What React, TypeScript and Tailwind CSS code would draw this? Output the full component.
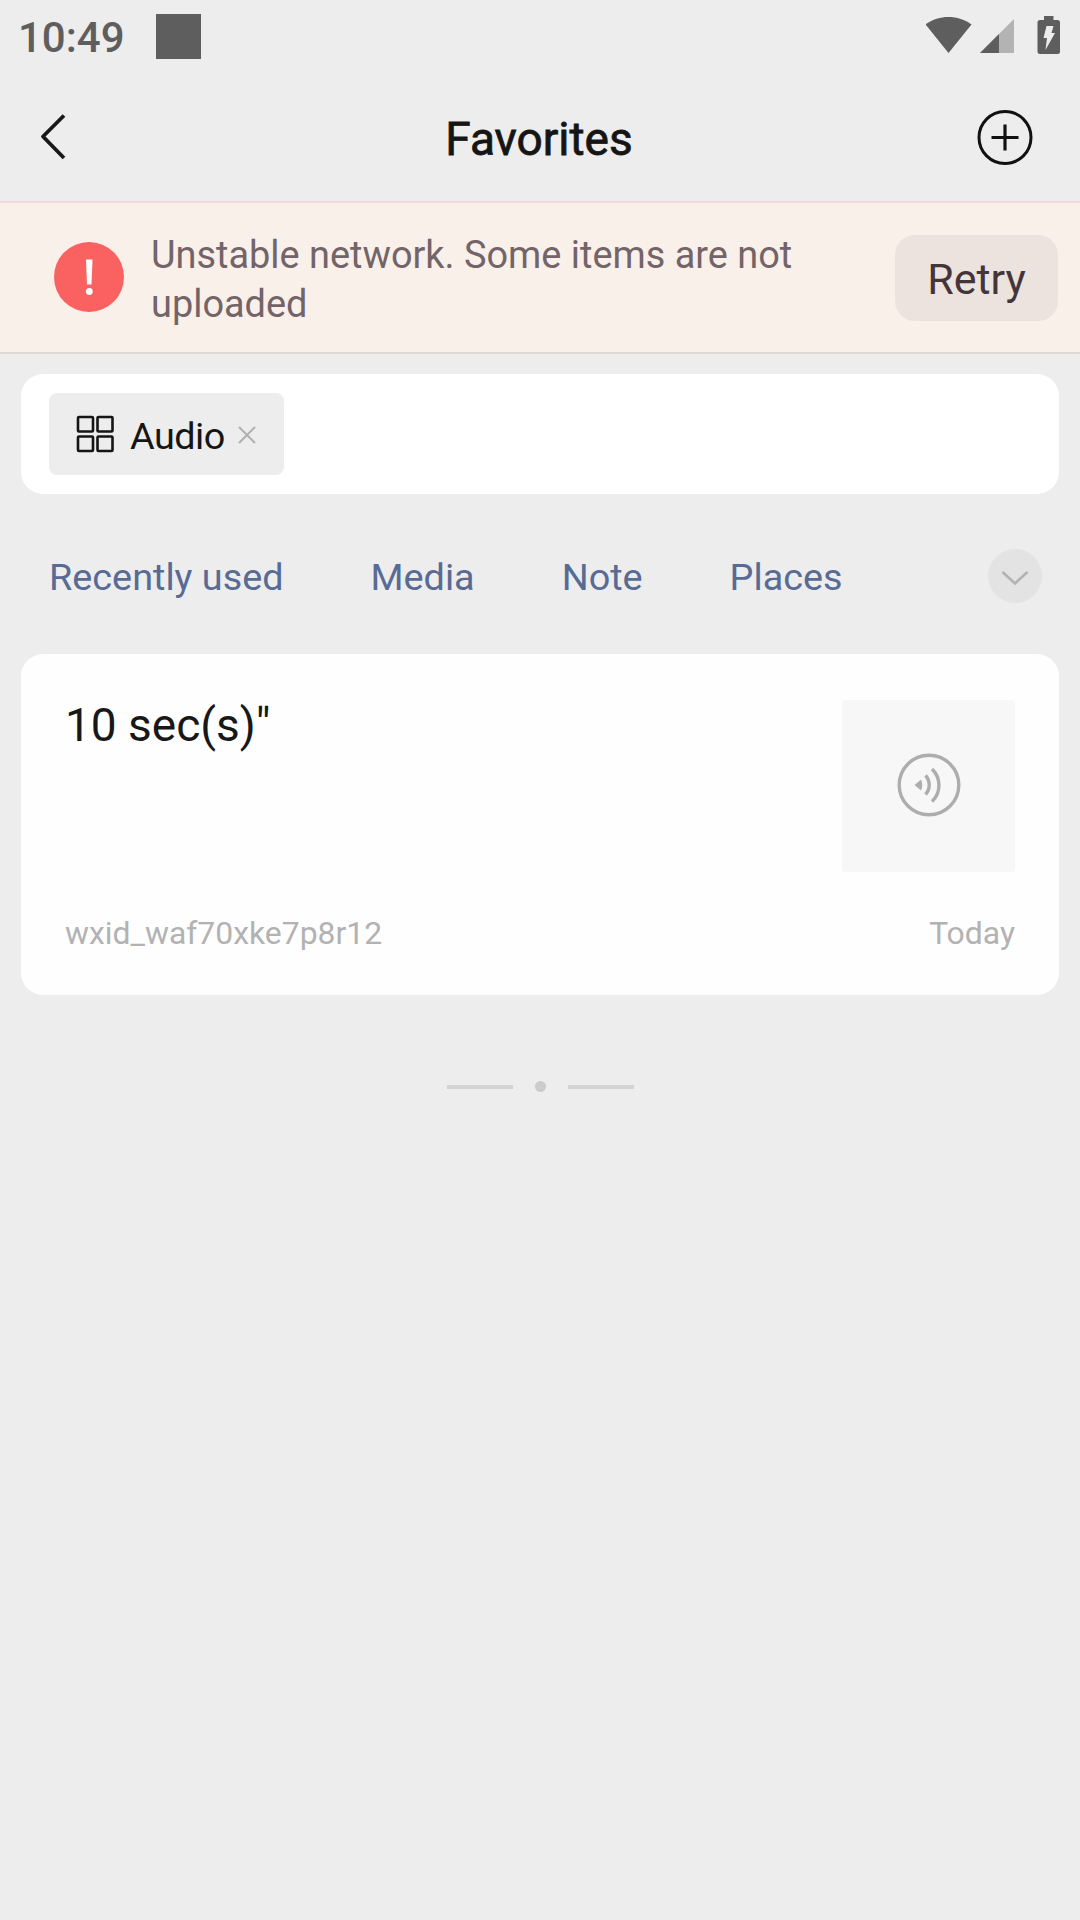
const tabs = ["Recently used", "Media", "Note", "Places"];

function StatusBar() {
  return (
    <div className="flex h-[72px] items-center pl-[18px] pr-[18px] text-[#5e5e5e]">
      <span className="pt-[4px] text-[42px] font-medium leading-none">10:49</span>
      <div className="ml-[31px] size-[45px] bg-[#5e5e5e]" />
      <svg className="ml-auto" width="136" height="40" viewBox="0 0 136 40">
        <path d="M-0.500 8.500C12.500 -1.500 32.500 -1.500 45.500 8.500L22.500 37Z" fill="#5e5e5e" />
        <path d="M88 3V37H54Z" fill="#b3b3b3" />
        <path d="M73 18V37H54Z" fill="#5e5e5e" />
        <path
          d="M118 0H127.500V4H131.500Q134 4 134 6.500V35.500Q134 38 131.500 38H114Q111.500 38 111.500 35.500V6.500Q111.500 4 114 4H118Z"
          fill="#5e5e5e"
        />
        <path d="M120.500 10H127.500L125.500 17H129L119.500 34L121 22H117.500Z" fill="#ededed" />
      </svg>
    </div>
  );
}

function Header() {
  return (
    <header className="flex h-[129px] items-start justify-between pl-[38px] pr-[46px]">
      <svg className="mt-[40px]" width="60" height="50" viewBox="0 0 60 50" fill="none">
        <path d="M26 3.500L5 24.500L26 46" stroke="#181818" strokeWidth="3.800" strokeLinejoin="round" strokeLinecap="butt" />
      </svg>
      <h1 className="ml-[4px] mt-[40px] text-[46px] font-normal leading-[54px] text-[#151515] [-webkit-text-stroke:0.8px_#151515]">
        Favorites
      </h1>
      <svg className="mt-[37px]" width="58" height="58" viewBox="0 0 58 58" fill="none" stroke="#111">
        <circle cx="29" cy="28.500" r="26" strokeWidth="3" />
        <path d="M29 15.500V41.500M15.500 28.500H42.500" strokeWidth="3.200" />
      </svg>
    </header>
  );
}

function Banner() {
  return (
    <div className="flex h-[153px] items-center border-y-2 border-t-[#f0d8dc] border-b-[#dcd8d6] bg-[#faf0ea] pl-[54px] pr-[22px]">
      <svg className="-mt-[1px]" width="70" height="70" viewBox="0 0 70 70">
        <circle cx="35" cy="35" r="35" fill="#fa6161" />
        <path d="M32 17.500H38.500L37.500 42.500H33Z" fill="#fff" />
        <circle cx="35.300" cy="49.500" r="3.400" fill="#fff" />
      </svg>
      <p className="ml-[27px] mt-[4px] w-[700px] text-[37.900px] leading-[49px] text-[#736469]">
        Unstable network. Some items are not
        <br />
        uploaded
      </p>
      <button className="ml-auto h-[86px] w-[163px] rounded-[20px] bg-[#ede3de] pt-[3px] text-[43px] leading-[50px] text-[#44353a]">
        Retry
      </button>
    </div>
  );
}

function SearchBox() {
  return (
    <div className="mx-[21px] mt-[20px] flex h-[120px] items-center rounded-[22px] bg-white pl-[28px]">
      <div className="flex h-[82px] w-[235px] items-center rounded-[8px] bg-[#ededed] pl-[27px]">
        <svg width="38" height="38" viewBox="0 0 38 38" fill="none" stroke="#151515" strokeWidth="2.600">
          <rect x="2" y="2" width="15" height="14.500" rx="1" />
          <rect x="21.500" y="2" width="15" height="14.500" rx="1" />
          <rect x="2" y="21.500" width="15" height="14.500" rx="1" />
          <rect x="21.500" y="21.500" width="15" height="14.500" rx="1" />
        </svg>
        <span className="ml-[16px] mt-[4px] text-[37.800px] leading-[46px] tracking-[-0.500px] text-[#151515]">Audio</span>
        <svg className="ml-[13px] mt-[1px]" width="18" height="18" viewBox="0 0 18 18" stroke="#b0b0b0" strokeWidth="2">
          <path d="M1 1L17 17M17 1L1 17" />
        </svg>
      </div>
    </div>
  );
}

function Tabs() {
  return (
    <nav className="flex h-[160px] items-center gap-[87px] pl-[49px] pr-[38px] pt-[3px] text-[37.800px] leading-[46px] text-[#576b95]">
      {tabs.map((tab) => (
        <span key={tab} className="pt-[3px]">
          {tab}
        </span>
      ))}
      <svg className="ml-auto" width="54" height="54" viewBox="0 0 54 54" fill="none">
        <circle cx="27" cy="27" r="27" fill="#e3e3e3" />
        <path d="M14.500 23L27 34.500L39.500 23" stroke="#b2b2b2" strokeWidth="2.600" />
      </svg>
    </nav>
  );
}

function AudioCard() {
  return (
    <article className="mx-[21px] flex h-[341px] flex-col rounded-[22px] bg-[#fefefe] pl-[44px] pr-[44px] pt-[46px]">
      <div className="flex h-[172px] justify-between">
        <h2 className="-mt-[2px] text-[46px] leading-[54px] text-[#181818]">10 sec(s)"</h2>
        <div className="flex h-[172px] w-[173px] items-center justify-center rounded-[4px] bg-[#f7f7f7] pb-[3px]">
          <svg width="64" height="64" viewBox="0 0 64 64" fill="none" stroke="#adadad" strokeWidth="3.400">
            <circle cx="32" cy="32" r="29.800" />
            <path d="M17.500 32L24 26.500Q26.500 32 24 37.500Z" fill="#adadad" stroke="none" />
            <path d="M28.500 22.500A14 14 0 0 1 28.500 41.500M35 16A22.500 22.500 0 0 1 35 48.500" />
          </svg>
        </div>
      </div>
      <div className="mt-[42px] flex justify-between text-[31.900px] leading-[38px] text-[#b2b2b2]">
        <span>wxid_waf70xke7p8r12</span>
        <span>Today</span>
      </div>
    </article>
  );
}

export default function App() {
  return (
    <main className="h-[1920px] w-[1080px] overflow-hidden bg-[#ededed] font-['Roboto',sans-serif]">
      <StatusBar />
      <Header />
      <Banner />
      <SearchBox />
      <Tabs />
      <AudioCard />
      <div className="mt-[86px] flex items-center justify-center gap-[22px]">
        <div className="h-[4px] w-[66px] bg-[#d3d3d3]" />
        <div className="size-[11px] rounded-full bg-[#cbcbcb]" />
        <div className="h-[4px] w-[66px] bg-[#d3d3d3]" />
      </div>
    </main>
  );
}
